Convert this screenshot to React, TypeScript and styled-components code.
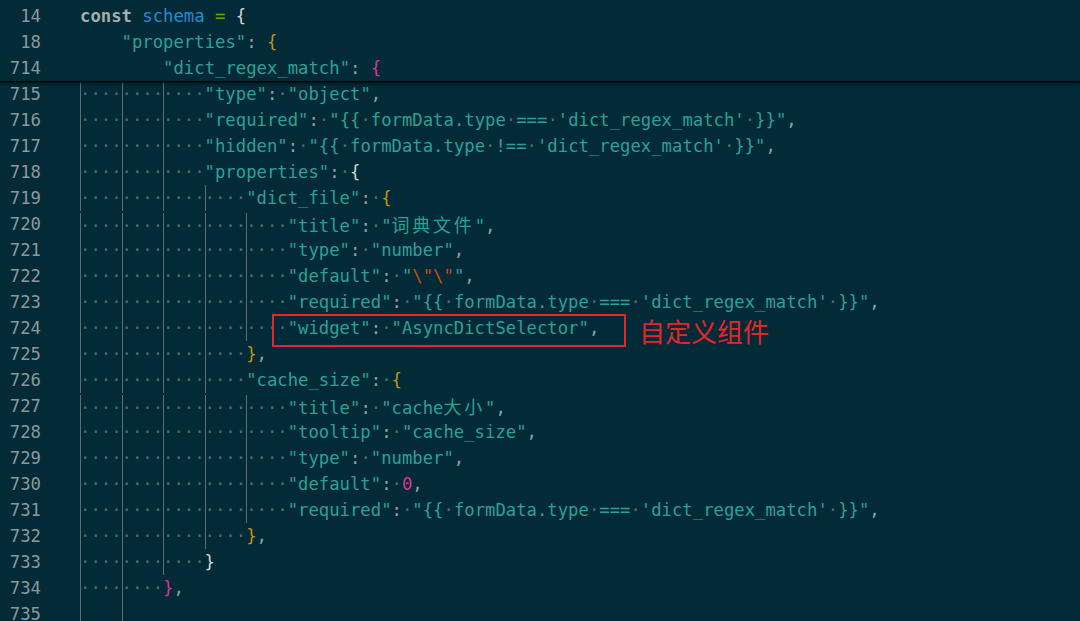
import React from "react";
import styled, { createGlobalStyle } from "styled-components";

const C = {
  bg: "#032a37",
  num: "#8b999c",
  str: "#2aa198",
  punct: "#93a1a1",
  dot: "#53696f",
  guide: "#5a6f76",
  white: "#cfd6d6",
  gold: "#c1950e",
  magenta: "#d8388a",
  orange: "#cb4b16",
  blue: "#268bd2",
  green: "#859900",
  keyword: "#a3afaf",
  red: "#e3262b",
};

const GlobalStyle = createGlobalStyle`
  html, body { margin: 0; padding: 0; background: ${C.bg}; overflow: hidden; }
`;

const Editor = styled.div`
  width: 1080px;
  height: 621px;
  background: ${C.bg};
  font-family: "DejaVu Sans Mono", "Liberation Mono", "Noto Sans CJK SC", monospace;
  font-size: 17.25px;
  overflow: hidden;
`;

const StickyHeader = styled.div`
  position: relative;
  z-index: 2;
  padding-top: 3px;
  background: ${C.bg};
  box-shadow: 0 1px 0 #000, 0 2px 3px rgba(0, 0, 0, 0.75);
`;

const Body = styled.div`
  display: flex;
  flex-direction: column;
`;

const Row = styled.div`
  display: flex;
  height: 26px;
  line-height: 26px;
`;

const LineNo = styled.div`
  flex: none;
  width: 41px;
  margin-right: 39px;
  text-align: right;
  color: ${C.num};
`;

const Code = styled.div`
  position: relative;
  flex: 1;
  white-space: pre;
`;

const Indent = styled.span<{ $guide: boolean }>`
  display: inline-block;
  width: 4ch;
  color: ${C.dot};
  background: ${(p) =>
    p.$guide ? `linear-gradient(to right, ${C.guide} 1px, transparent 1px)` : "none"};
`;

const Tok = styled.span<{ $c: string; $bold?: boolean }>`
  color: ${(p) => p.$c};
  font-weight: ${(p) => (p.$bold ? 700 : 400)};
`;

const Dot = styled.span`
  color: ${C.dot};
`;

const Wide = styled.span`
  font-family: "Noto Sans CJK SC", sans-serif;
  font-size: 18px;
  letter-spacing: 2.77px;
`;

const Annotation = styled.div`
  position: absolute;
  left: 192px;
  top: -1px;
  display: flex;
  align-items: center;
  gap: 13px;
`;

const RedBox = styled.div`
  box-sizing: border-box;
  width: 354px;
  height: 33px;
  border: 2px solid ${C.red};
`;

const Label = styled.span`
  font-family: "Noto Sans CJK SC", sans-serif;
  font-size: 26px;
  line-height: 1;
  color: ${C.red};
`;

type T = { t: "ws" | "str" | "esc" | "brace" | "num" | "punct"; v: string };

function lex(src: string): T[] {
  const out: T[] = [];
  let i = 0;
  while (i < src.length) {
    const ch = src[i];
    if (ch === " ") {
      out.push({ t: "ws", v: " " });
      i++;
    } else if (ch === '"') {
      out.push({ t: "str", v: '"' });
      let j = i + 1;
      while (j < src.length && src[j] !== '"') {
        if (src[j] === "\\") {
          out.push({ t: "esc", v: src.slice(j, j + 2) });
          j += 2;
        } else if (src[j] === " ") {
          out.push({ t: "ws", v: " " });
          j++;
        } else {
          let k = j;
          while (k < src.length && !['"', "\\", " "].includes(src[k])) k++;
          out.push({ t: "str", v: src.slice(j, k) });
          j = k;
        }
      }
      out.push({ t: "str", v: '"' });
      i = j + 1;
    } else if (ch === "{" || ch === "}") {
      out.push({ t: "brace", v: ch });
      i++;
    } else if (/[0-9]/.test(ch)) {
      out.push({ t: "num", v: ch });
      i++;
    } else {
      out.push({ t: "punct", v: ch });
      i++;
    }
  }
  return out;
}

const cjk = /([\u4e00-\u9fff]+)/;

function renderStr(v: string, key: string) {
  const parts = v.split(cjk).filter((x) => x.length > 0);
  return (
    <Tok key={key} $c={C.str}>
      {parts.map((p, i) => (cjk.test(p) ? <Wide key={i}>{p}</Wide> : p))}
    </Tok>
  );
}

function renderCode(src: string, brace: string) {
  return lex(src).map((tk, i) => {
    const k = String(i);
    switch (tk.t) {
      case "ws":
        return <Dot key={k}>·</Dot>;
      case "str":
        return renderStr(tk.v, k);
      case "esc":
        return (
          <Tok key={k} $c={C.orange}>
            {tk.v}
          </Tok>
        );
      case "brace":
        return (
          <Tok key={k} $c={brace}>
            {tk.v}
          </Tok>
        );
      case "num":
        return (
          <Tok key={k} $c={C.magenta}>
            {tk.v}
          </Tok>
        );
      default:
        return (
          <Tok key={k} $c={C.punct}>
            {tk.v}
          </Tok>
        );
    }
  });
}

type Line = {
  n: number;
  indent: number;
  guides: number[];
  src: string;
  brace?: string;
  note?: boolean;
};

const REQ = `"required": "{{ formData.type === 'dict_regex_match' }}",`;

const lines: Line[] = [
  { n: 715, indent: 3, guides: [0, 1, 2], src: `"type": "object",` },
  { n: 716, indent: 3, guides: [0, 1, 2], src: REQ },
  { n: 717, indent: 3, guides: [0, 1, 2], src: `"hidden": "{{ formData.type !== 'dict_regex_match' }}",` },
  { n: 718, indent: 3, guides: [0, 1, 2], src: `"properties": {`, brace: C.white },
  { n: 719, indent: 4, guides: [0, 1, 2, 3], src: `"dict_file": {`, brace: C.gold },
  { n: 720, indent: 5, guides: [0, 1, 2, 3, 4], src: `"title": "词典文件",` },
  { n: 721, indent: 5, guides: [0, 1, 2, 3, 4], src: `"type": "number",` },
  { n: 722, indent: 5, guides: [0, 1, 2, 3, 4], src: `"default": "\\"\\"",` },
  { n: 723, indent: 5, guides: [0, 1, 2, 3, 4], src: REQ },
  { n: 724, indent: 5, guides: [0, 1, 2, 3, 4], src: `"widget": "AsyncDictSelector",`, note: true },
  { n: 725, indent: 4, guides: [0, 1, 2, 3], src: `},`, brace: C.gold },
  { n: 726, indent: 4, guides: [0, 1, 2, 3], src: `"cache_size": {`, brace: C.gold },
  { n: 727, indent: 5, guides: [0, 1, 2, 3, 4], src: `"title": "cache大小",` },
  { n: 728, indent: 5, guides: [0, 1, 2, 3, 4], src: `"tooltip": "cache_size",` },
  { n: 729, indent: 5, guides: [0, 1, 2, 3, 4], src: `"type": "number",` },
  { n: 730, indent: 5, guides: [0, 1, 2, 3, 4], src: `"default": 0,` },
  { n: 731, indent: 5, guides: [0, 1, 2, 3, 4], src: REQ },
  { n: 732, indent: 4, guides: [0, 1, 2, 3], src: `},`, brace: C.gold },
  { n: 733, indent: 3, guides: [0, 1, 2], src: `}`, brace: C.white },
  { n: 734, indent: 2, guides: [0, 1], src: `},`, brace: C.magenta },
  { n: 735, indent: 2, guides: [0, 1], src: ``, brace: C.white },
];

function CodeLine({ line }: { line: Line }) {
  const empty = line.src.length === 0;
  return (
    <Row>
      <LineNo>{line.n}</LineNo>
      <Code>
        {Array.from({ length: line.indent }, (_, i) => (
          <Indent key={i} $guide={line.guides.includes(i)}>
            {empty ? "    " : "····"}
          </Indent>
        ))}
        {renderCode(line.src, line.brace ?? C.white)}
        {line.note && (
          <Annotation>
            <RedBox />
            <Label>自定义组件</Label>
          </Annotation>
        )}
      </Code>
    </Row>
  );
}

export default function App() {
  return (
    <>
      <GlobalStyle />
      <Editor>
        <StickyHeader>
          <Row>
            <LineNo>14</LineNo>
            <Code>
              <Tok $c={C.keyword} $bold>
                const
              </Tok>{" "}
              <Tok $c={C.blue}>schema</Tok> <Tok $c={C.green}>=</Tok>{" "}
              <Tok $c={C.white}>{"{"}</Tok>
            </Code>
          </Row>
          <Row>
            <LineNo>18</LineNo>
            <Code>
              {"    "}
              <Tok $c={C.str}>"properties"</Tok>
              <Tok $c={C.punct}>:</Tok> <Tok $c={C.gold}>{"{"}</Tok>
            </Code>
          </Row>
          <Row>
            <LineNo>714</LineNo>
            <Code>
              {"        "}
              <Tok $c={C.str}>"dict_regex_match"</Tok>
              <Tok $c={C.punct}>:</Tok> <Tok $c={C.magenta}>{"{"}</Tok>
            </Code>
          </Row>
        </StickyHeader>
        <Body>
          {lines.map((l) => (
            <CodeLine key={l.n} line={l} />
          ))}
        </Body>
      </Editor>
    </>
  );
}
